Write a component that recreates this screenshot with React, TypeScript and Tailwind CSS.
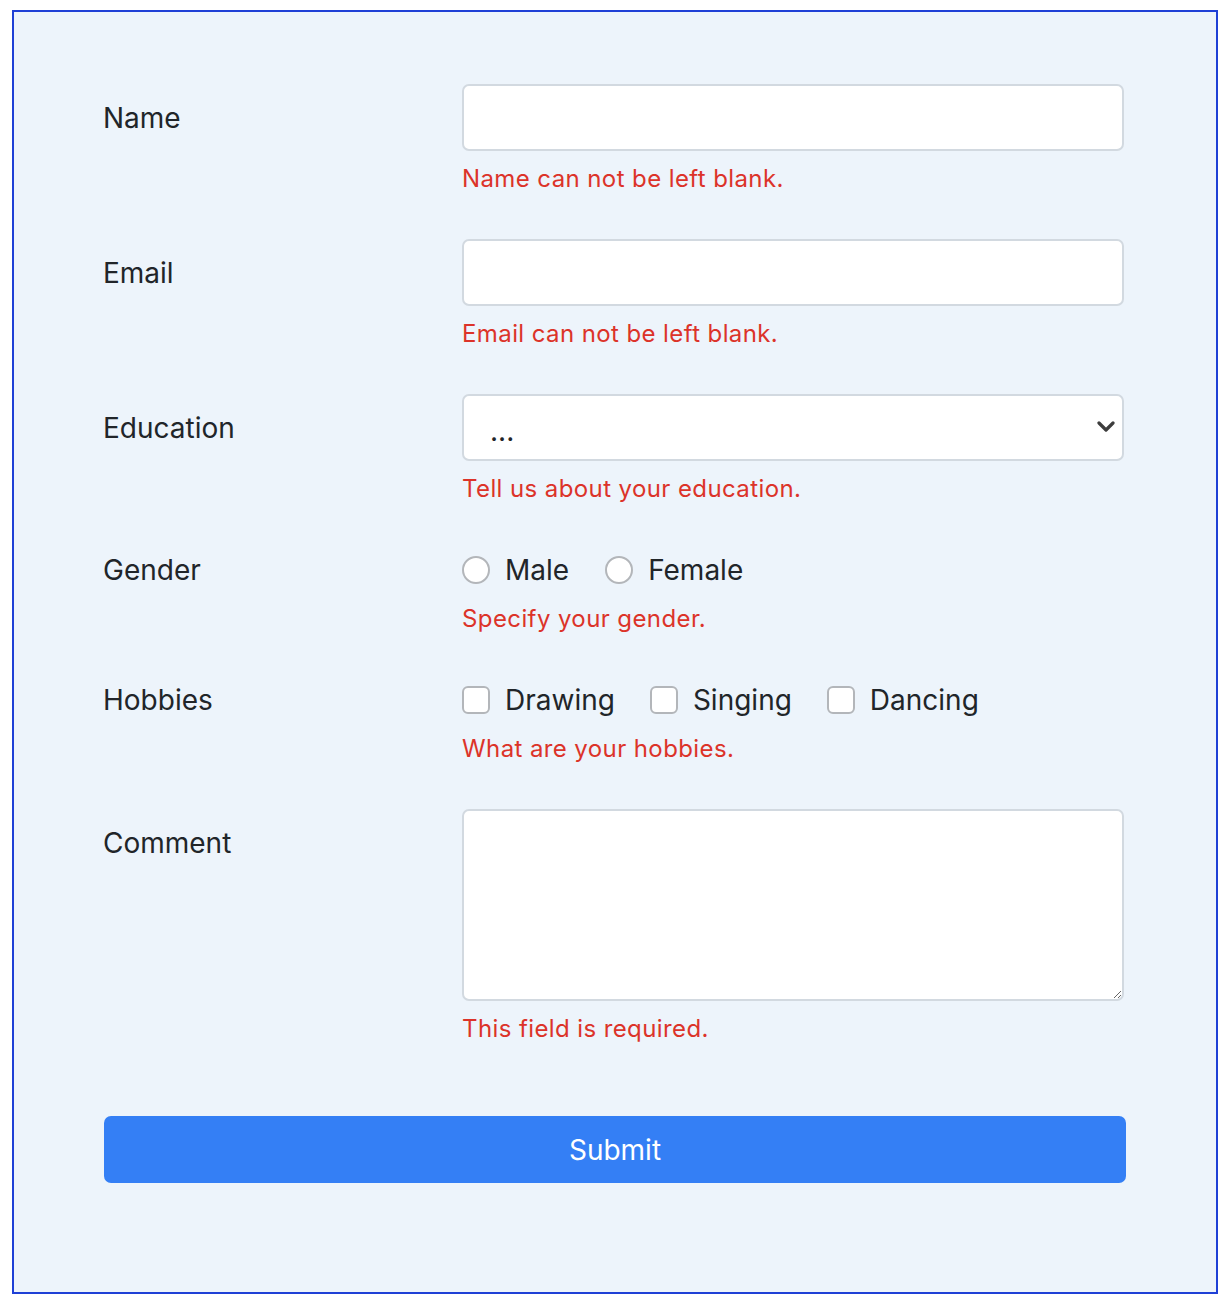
import { useState } from "react";

const font = { fontFamily: "Inter, 'Liberation Sans', sans-serif" };

function Row({
  label,
  children,
  error,
  inline,
}: {
  label: string;
  children: React.ReactNode;
  error: string;
  inline?: boolean;
}) {
  return (
    <div className="grid grid-cols-[358px_662px]">
      <label
        className={
          "text-[28px] leading-[42px] text-[#212529] -ml-px " + (inline ? "pt-0" : "pt-[13px]")
        }
      >
        {label}
      </label>
      <div>
        {children}
        <p className="mt-[11px] text-[24px] leading-[34px] tracking-[0.4px] text-[#dc3329]">{error}</p>
      </div>
    </div>
  );
}

const inputCls =
  "block w-full h-[67px] rounded-[7px] border-2 border-[#d2d9e0] bg-white px-[20px] text-[28px] text-[#212529] outline-none";

export default function App() {
  const [gender, setGender] = useState("");
  const [hobbies, setHobbies] = useState<string[]>([]);

  const toggleHobby = (h: string) =>
    setHobbies((prev) => (prev.includes(h) ? prev.filter((x) => x !== h) : [...prev, h]));

  return (
    <div className="pt-[10px] pl-[12px]" style={font}>
      <form
        className="w-[1206px] h-[1284px] border-2 border-[#1f40d6] bg-[#edf4fb] pl-[90px] pt-[72px]"
        onSubmit={(e) => e.preventDefault()}
      >
        <div className="flex flex-col gap-[43px]">
          <Row label="Name" error="Name can not be left blank.">
            <input type="text" className={inputCls} />
          </Row>

          <Row label="Email" error="Email can not be left blank.">
            <input type="email" className={inputCls} />
          </Row>

          <Row label="Education" error="Tell us about your education.">
            <div className="relative">
              <select className={inputCls + " appearance-none pl-[26px] pt-[6px]"} defaultValue="">
                <option value="">...</option>
                <option>High School</option>
                <option>Bachelor</option>
                <option>Master</option>
              </select>
              <svg
                className="absolute right-[9px] top-[27px] pointer-events-none"
                width="18"
                height="12"
                viewBox="0 0 18 12"
                fill="none"
              >
                <polyline
                  points="2,2 9,9 16,2"
                  stroke="#3d3d3d"
                  strokeWidth="3.2"
                  strokeLinecap="round"
                  strokeLinejoin="round"
                />
              </svg>
            </div>
          </Row>

          <Row label="Gender" error="Specify your gender." inline>
            <div className="flex h-[42px] items-center gap-[36px]">
              {["Male", "Female"].map((g) => (
                <label key={g} className="flex items-center gap-[15px] text-[28px] text-[#212529]">
                  <input
                    type="radio"
                    name="gender"
                    checked={gender === g}
                    onChange={() => setGender(g)}
                    className="appearance-none w-[28px] h-[28px] rounded-full border-2 border-[#b3b6ba] bg-white"
                  />
                  {g}
                </label>
              ))}
            </div>
          </Row>

          <Row label="Hobbies" error="What are your hobbies." inline>
            <div className="flex h-[42px] items-center gap-[35px]">
              {["Drawing", "Singing", "Dancing"].map((h) => (
                <label key={h} className="flex items-center gap-[15px] text-[28px] text-[#212529]">
                  <input
                    type="checkbox"
                    checked={hobbies.includes(h)}
                    onChange={() => toggleHobby(h)}
                    className="appearance-none w-[28px] h-[28px] rounded-[6px] border-2 border-[#b3b6ba] bg-white"
                  />
                  {h}
                </label>
              ))}
            </div>
          </Row>

          <Row label="Comment" error="This field is required.">
            <textarea className="block w-full h-[192px] rounded-[7px] border-2 border-[#d2d9e0] bg-white px-[20px] py-[10px] text-[28px] outline-none" />
          </Row>
        </div>

        <button
          type="submit"
          className="mt-[70px] w-[1022px] h-[67px] rounded-[7px] bg-[#347ff5] text-[28px] text-white"
        >
          Submit
        </button>
      </form>
    </div>
  );
}
